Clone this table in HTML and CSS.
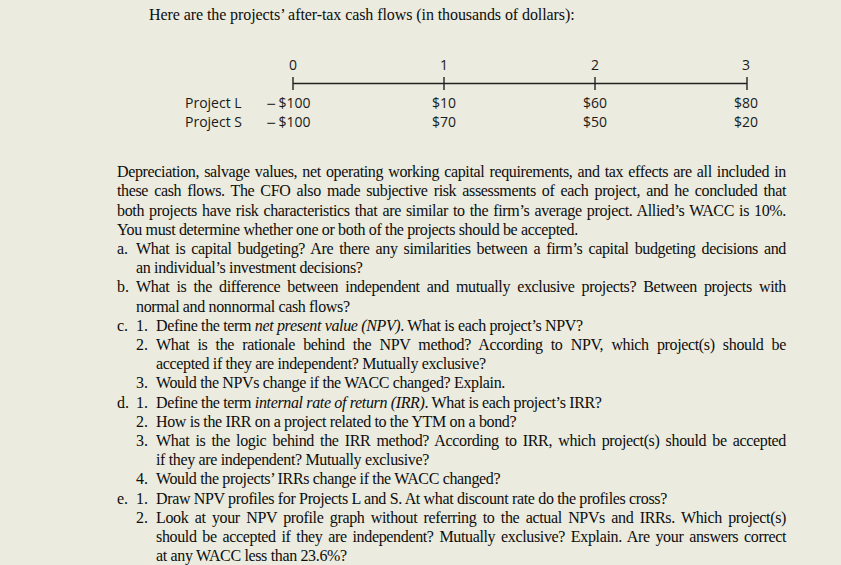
FILE: index.html
```html
<!DOCTYPE html>
<html>
<head>
<meta charset="utf-8">
<link rel="stylesheet" href="styles.css">
</head>
<body>
<div class="page">
  <p class="intro">Here are the projects’ after-tax cash flows (in thousands of dollars):</p>

  <div class="timeline">
    <div class="labels">
      <div class="label">Project L</div>
      <div class="label">Project S</div>
    </div>
    <div class="chart">
      <div class="cell">0</div>
      <div class="cell">1</div>
      <div class="cell">2</div>
      <div class="cell">3</div>

      <div class="axis">
        <svg width="457" height="14" viewBox="0 0 457 14">
          <line x1="1" y1="6.5" x2="455" y2="6.5" stroke="#222" stroke-width="1.4"/>
          <line x1="1" y1="0" x2="1" y2="13" stroke="#222" stroke-width="1.4"/>
          <line x1="152" y1="0" x2="152" y2="13" stroke="#222" stroke-width="1.4"/>
          <line x1="303" y1="0" x2="303" y2="13" stroke="#222" stroke-width="1.4"/>
          <line x1="455" y1="0" x2="455" y2="13" stroke="#222" stroke-width="1.4"/>
        </svg>
      </div>

      <div class="cell neg"><span class="minus">−</span>$100</div>
      <div class="cell">$10</div>
      <div class="cell">$60</div>
      <div class="cell">$80</div>

      <div class="cell neg"><span class="minus">−</span>$100</div>
      <div class="cell">$70</div>
      <div class="cell">$50</div>
      <div class="cell">$20</div>
    </div>
  </div>

  <p class="para"><span class="ln">Depreciation, salvage values, net operating working capital requirements, and tax effects are all included in</span><span class="ln">these cash flows. The CFO also made subjective risk assessments of each project, and he concluded that</span><span class="ln">both projects have risk characteristics that are similar to the firm’s average project. Allied’s WACC is 10%.</span>You must determine whether one or both of the projects should be accepted.</p>

  <div class="questions">
    <div class="item">
      <span class="mark">a.</span>
      <div class="body"><span class="ln">What is capital budgeting? Are there any similarities between a firm’s capital budgeting decisions and</span>an individual’s investment decisions?</div>
    </div>
    <div class="item">
      <span class="mark">b.</span>
      <div class="body"><span class="ln">What is the difference between independent and mutually exclusive projects? Between projects with</span>normal and nonnormal cash flows?</div>
    </div>
    <div class="item">
      <span class="mark">c.</span>
      <div class="body">
        <div class="sub"><span class="num">1.</span><div class="text">Define the term <i>net present value (NPV)</i>. What is each project’s NPV?</div></div>
        <div class="sub"><span class="num">2.</span><div class="text"><span class="ln">What is the rationale behind the NPV method? According to NPV, which project(s) should be</span>accepted if they are independent? Mutually exclusive?</div></div>
        <div class="sub"><span class="num">3.</span><div class="text">Would the NPVs change if the WACC changed? Explain.</div></div>
      </div>
    </div>
    <div class="item">
      <span class="mark">d.</span>
      <div class="body">
        <div class="sub"><span class="num">1.</span><div class="text">Define the term <i>internal rate of return (IRR)</i>. What is each project’s IRR?</div></div>
        <div class="sub"><span class="num">2.</span><div class="text">How is the IRR on a project related to the YTM on a bond?</div></div>
        <div class="sub"><span class="num">3.</span><div class="text"><span class="ln">What is the logic behind the IRR method? According to IRR, which project(s) should be accepted</span>if they are independent? Mutually exclusive?</div></div>
        <div class="sub"><span class="num">4.</span><div class="text">Would the projects’ IRRs change if the WACC changed?</div></div>
      </div>
    </div>
    <div class="item">
      <span class="mark">e.</span>
      <div class="body">
        <div class="sub"><span class="num">1.</span><div class="text">Draw NPV profiles for Projects L and S. At what discount rate do the profiles cross?</div></div>
        <div class="sub"><span class="num">2.</span><div class="text"><span class="ln">Look at your NPV profile graph without referring to the actual NPVs and IRRs. Which project(s)</span><span class="ln">should be accepted if they are independent? Mutually exclusive? Explain. Are your answers correct</span>at any WACC less than 23.6%?</div></div>
      </div>
    </div>
  </div>
</div>
</body>
</html>
```

FILE: styles.css
```css
html, body {
  margin: 0;
  padding: 0;
  background: #ebebdf;
}

.page {
  width: 841px;
  height: 565px;
  overflow: hidden;
  color: #0d0d0d;
  font-family: "Liberation Serif", "Times New Roman", serif;
  font-size: 16px;
  line-height: 19.2px;
  padding-top: 5px;
  box-sizing: border-box;
}

.intro {
  margin: 0;
  padding-left: 149px;
  letter-spacing: -0.08px;
}

.timeline {
  display: flex;
  margin: 31px 0 0 185px;
  font-family: "Open Sans", "Liberation Sans", sans-serif;
  font-size: 14px;
  line-height: 19px;
  color: #1a1a1a;
}

.labels {
  width: 78px;
  padding-top: 38px;
  white-space: nowrap;
}

.label {
  height: 19px;
}

.chart {
  display: grid;
  grid-template-columns: repeat(4, 60px);
  column-gap: 91px;
}

.cell {
  height: 19px;
  text-align: center;
  white-space: nowrap;
}

.neg {
  text-align: left;
  padding-left: 3px;
}

.minus {
  font-family: "DejaVu Sans", sans-serif;
  font-size: 12.5px;
  line-height: 1;
  margin-right: 2px;
}

.axis {
  grid-column: 1 / span 4;
  margin-left: 29px;
  height: 14px;
  margin-top: 3px;
  margin-bottom: 2px;
}

.axis svg {
  display: block;
}

.para {
  margin: 31px 0 0 117px;
  width: 669px;
  letter-spacing: -0.35px;
}

.ln {
  display: block;
  white-space: nowrap;
  text-align: justify;
  text-align-last: justify;
}

.questions {
  margin: 0 0 0 117px;
  width: 669px;
  letter-spacing: -0.35px;
}

.item {
  display: flex;
}

.mark {
  width: 19px;
  flex: none;
  letter-spacing: 0;
}

.body {
  flex: 1;
}

.sub {
  display: flex;
}

.num {
  width: 20px;
  flex: none;
  letter-spacing: 0;
}

.text {
  flex: 1;
}
```
